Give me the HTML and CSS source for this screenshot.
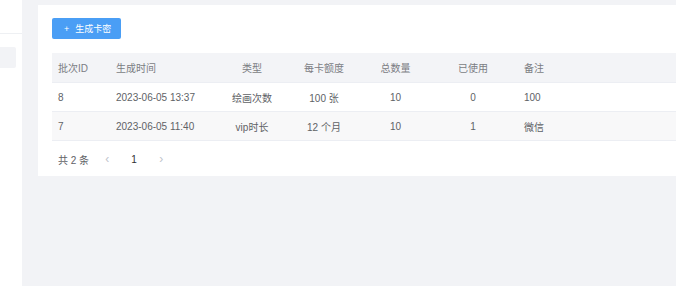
FILE: index.html
```html
<!DOCTYPE html>
<html lang="zh-CN">
<head>
  <meta charset="UTF-8" />
  <title>卡密管理</title>
  <link rel="stylesheet" href="styles.css">
</head>
<body>
  <div class="layout">
    <aside class="sidebar">
      <div class="logo"></div>
      <div class="menu-item"></div>
    </aside>

    <main class="main">
      <div class="card">
        <button class="btn-primary"><span class="plus">+</span>生成卡密</button>

        <table class="table">
          <colgroup>
            <col style="width:58px">
            <col style="width:105px">
            <col style="width:74px">
            <col style="width:70px">
            <col style="width:73px">
            <col style="width:82px">
            <col>
          </colgroup>
          <thead>
            <tr>
              <th>批次ID</th>
              <th>生成时间</th>
              <th class="center">类型</th>
              <th class="center">每卡额度</th>
              <th class="center">总数量</th>
              <th class="center">已使用</th>
              <th class="note">备注</th>
            </tr>
          </thead>
          <tbody>
            <tr>
              <td>8</td>
              <td>2023-06-05 13:37</td>
              <td class="center">绘画次数</td>
              <td class="center">100 张</td>
              <td class="center">10</td>
              <td class="center">0</td>
              <td class="note">100</td>
            </tr>
            <tr class="striped">
              <td>7</td>
              <td>2023-06-05 11:40</td>
              <td class="center">vip时长</td>
              <td class="center">12 个月</td>
              <td class="center">10</td>
              <td class="center">1</td>
              <td class="note">微信</td>
            </tr>
          </tbody>
        </table>

        <div class="pagination">
          <span class="total">共 2 条</span>
          <span class="arrow">&lsaquo;</span>
          <span class="page">1</span>
          <span class="arrow">&rsaquo;</span>
        </div>
      </div>
    </main>
  </div>
</body>
</html>
```

FILE: styles.css
```css
body {
  margin: 0;
  background-color: #f2f3f6;
  font-family: "Liberation Sans", "Noto Sans CJK SC", sans-serif;
  font-size: 10px;
  color: #606266;
  overflow: hidden;
}

.layout {
  display: flex;
  width: 690px;
  height: 286px;
}

.sidebar {
  width: 22px;
  flex-shrink: 0;
  background-color: #ffffff;
}

.logo {
  height: 33px;
  border-bottom: 1px solid #eef0f3;
}

.menu-item {
  width: 16px;
  height: 21px;
  margin-top: 13px;
  background-color: #f2f3f6;
  border-radius: 0 2px 2px 0;
}

.main {
  flex: 1;
  padding: 5px 0 0 16px;
}

.card {
  background-color: #ffffff;
  padding: 13px 14px 7px;
}

.btn-primary {
  display: flex;
  align-items: center;
  height: 21px;
  width: 69px;
  padding: 0 0 0 12px;
  border: none;
  border-radius: 2px;
  background-color: #4a9ef5;
  color: #ffffff;
  font-family: inherit;
  font-size: 9px;
  cursor: pointer;
}

.plus {
  margin-right: 6px;
  font-size: 9px;
}

.table {
  width: 100%;
  margin-top: 14px;
  border-collapse: collapse;
  table-layout: fixed;
}

.table th,
.table td {
  padding: 0 6px;
  text-align: left;
  white-space: nowrap;
  border-bottom: 1px solid #eceef3;
}

.table th {
  height: 29px;
  background-color: #f3f4f7;
  color: #7b7d83;
  font-weight: normal;
}

.table td {
  height: 28px;
}

.table .center {
  text-align: center;
}

.table .note {
  padding-left: 10px;
}

.table tr.striped td {
  background-color: #f8f8f9;
}

.pagination {
  display: flex;
  align-items: center;
  height: 20px;
  margin-top: 8px;
  padding-left: 6px;
}

.total {
  margin-right: 12px;
}

.arrow {
  width: 12px;
  color: #c0c4cc;
  font-size: 12px;
  text-align: center;
}

.page {
  width: 12px;
  margin: 0 15px;
  text-align: center;
  color: #303133;
}
```
